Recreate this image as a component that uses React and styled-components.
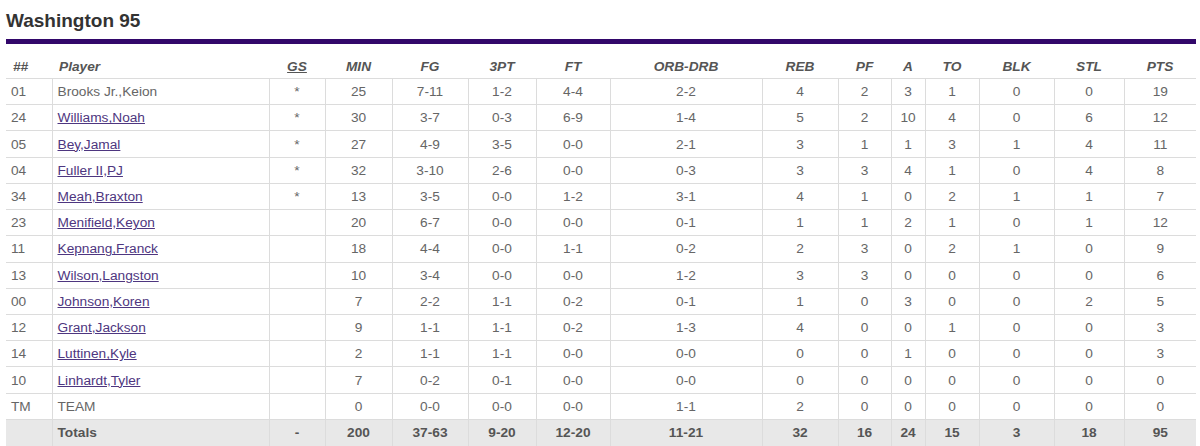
import React from 'react'
import styled, { createGlobalStyle } from 'styled-components'

const columns = [
    { key: 'num', label: '##', width: 46, align: 'left' },
    { key: 'player', label: 'Player', width: 217, align: 'left' },
    { key: 'gs', label: 'GS', width: 56, link: true },
    { key: 'min', label: 'MIN', width: 67 },
    { key: 'fg', label: 'FG', width: 76 },
    { key: 'tpt', label: '3PT', width: 68 },
    { key: 'ft', label: 'FT', width: 74 },
    { key: 'orb', label: 'ORB-DRB', width: 152 },
    { key: 'reb', label: 'REB', width: 76 },
    { key: 'pf', label: 'PF', width: 53 },
    { key: 'a', label: 'A', width: 34 },
    { key: 'to', label: 'TO', width: 54 },
    { key: 'blk', label: 'BLK', width: 75 },
    { key: 'stl', label: 'STL', width: 70 },
    { key: 'pts', label: 'PTS', width: 72 },
]

// num, name, link?, gs, min, fg, 3pt, ft, orb-drb, reb, pf, a, to, blk, stl, pts
const players = [
    ['01', 'Brooks Jr.,Keion', false, '*', 25, '7-11', '1-2', '4-4', '2-2', 4, 2, 3, 1, 0, 0, 19],
    ['24', 'Williams,Noah', true, '*', 30, '3-7', '0-3', '6-9', '1-4', 5, 2, 10, 4, 0, 6, 12],
    ['05', 'Bey,Jamal', true, '*', 27, '4-9', '3-5', '0-0', '2-1', 3, 1, 1, 3, 1, 4, 11],
    ['04', 'Fuller II,PJ', true, '*', 32, '3-10', '2-6', '0-0', '0-3', 3, 3, 4, 1, 0, 4, 8],
    ['34', 'Meah,Braxton', true, '*', 13, '3-5', '0-0', '1-2', '3-1', 4, 1, 0, 2, 1, 1, 7],
    ['23', 'Menifield,Keyon', true, '', 20, '6-7', '0-0', '0-0', '0-1', 1, 1, 2, 1, 0, 1, 12],
    ['11', 'Kepnang,Franck', true, '', 18, '4-4', '0-0', '1-1', '0-2', 2, 3, 0, 2, 1, 0, 9],
    ['13', 'Wilson,Langston', true, '', 10, '3-4', '0-0', '0-0', '1-2', 3, 3, 0, 0, 0, 0, 6],
    ['00', 'Johnson,Koren', true, '', 7, '2-2', '1-1', '0-2', '0-1', 1, 0, 3, 0, 0, 2, 5],
    ['12', 'Grant,Jackson', true, '', 9, '1-1', '1-1', '0-2', '1-3', 4, 0, 0, 1, 0, 0, 3],
    ['14', 'Luttinen,Kyle', true, '', 2, '1-1', '1-1', '0-0', '0-0', 0, 0, 1, 0, 0, 0, 3],
    ['10', 'Linhardt,Tyler', true, '', 7, '0-2', '0-1', '0-0', '0-0', 0, 0, 0, 0, 0, 0, 0],
    ['TM', 'TEAM', false, '', 0, '0-0', '0-0', '0-0', '1-1', 2, 0, 0, 0, 0, 0, 0],
]

const totals = ['', 'Totals', false, '-', 200, '37-63', '9-20', '12-20', '11-21', 32, 16, 24, 15, 3, 18, 95]

const App = () => (
    <Page>
        <GlobalStyle />
        <Title>Washington 95</Title>
        <Table>
            <colgroup>
                {columns.map(c => <col key={c.key} style={{ width: c.width }} />)}
            </colgroup>
            <thead>
                <tr>
                    {columns.map(c => (
                        <HeadCell key={c.key} align={c.align}>
                            {c.link ? <HeadLink>{c.label}</HeadLink> : c.label}
                        </HeadCell>
                    ))}
                </tr>
            </thead>
            <tbody>
                {players.map(row => <StatRow key={row[0]} row={row} />)}
                <StatRow row={totals} total />
            </tbody>
        </Table>
    </Page>
)

const StatRow = ({ row, total }) => {
    const [num, name, link, ...stats] = row
    return (
        <Row $total={total}>
            <Cell align="left">{num}</Cell>
            <Cell align="left">{link ? <PlayerLink>{name}</PlayerLink> : name}</Cell>
            {stats.map((s, i) => (
                <Cell key={i}>{s}</Cell>
            ))}
        </Row>
    )
}

export default App
//-------------STYLES-------------------------------------------

const GlobalStyle = createGlobalStyle`
    body {
        margin: 0;
        background: #fff;
        font-family: Arial, "Liberation Sans", sans-serif;
    }
`

const Page = styled.div`
    padding: 0 4px 0 6px;
    width: 1190px;
`

const Title = styled.h2`
    margin: 0;
    padding-top: 10px;
    height: 39px;
    box-sizing: border-box;
    font-size: 19px;
    line-height: 22px;
    font-weight: bold;
    color: #333;
`

const Table = styled.table`
    width: 1190px;
    table-layout: fixed;
    border-collapse: collapse;
    border-top: 5px solid #32076a;
    font-size: 13.7px;
    color: #666;
`

const HeadCell = styled.th`
    height: 37px;
    padding: 15px 0 0 ${props => props.align === 'left' ? '7px' : '0'};
    line-height: 16px;
    vertical-align: top;
    text-align: ${props => props.align || 'center'};
    font-style: italic;
    font-weight: bold;
    color: #555;
    box-sizing: border-box;
`

const HeadLink = styled.span`
    text-decoration: underline;
`

const Row = styled.tr`
    height: 26.23px;
    background: ${props => props.$total ? '#e8e8e8' : '#fff'};
    font-weight: ${props => props.$total ? 'bold' : 'normal'};
    color: ${props => props.$total ? '#555' : '#666'};
`

const Cell = styled.td`
    padding: 0 0 0 ${props => props.align === 'left' ? '5px' : '0'};
    text-align: ${props => props.align || 'center'};
    border-top: 1px solid #dcdcdc;
    border-left: 1px solid #dcdcdc;
    white-space: nowrap;
    &:first-child {
        border-left: none;
    }
`

const PlayerLink = styled.a`
    color: #4e3680;
    text-decoration: underline;
    cursor: pointer;
`
